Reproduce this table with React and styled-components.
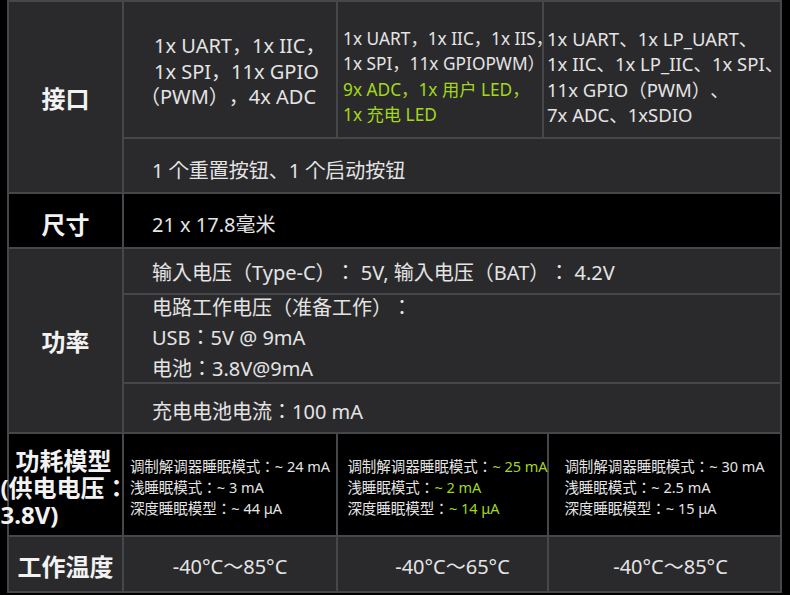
import React from "react";
import styled, { createGlobalStyle } from "styled-components";

const GlobalStyle = createGlobalStyle`
  html, body { margin: 0; padding: 0; background: #000; }
  body {
    font-family: "Noto Sans", "Noto Sans CJK JP", sans-serif;
    color: #e4e4e4;
    text-spacing-trim: space-all;
  }
`;

const Page = styled.div`
  width: 790px;
  height: 595px;
  box-sizing: border-box;
  padding-left: 7px;
  background: #000;
  overflow: hidden;
`;

const Table = styled.div`
  width: 775px;
  box-sizing: border-box;
  padding: 2px;
  display: flex;
  flex-direction: column;
  gap: 2px;
  background: #45474b;
`;

const Section = styled.div`
  display: grid;
  grid-template-columns: ${(p) => p.$cols};
  grid-template-rows: ${(p) => p.$rows};
  gap: 2px;
`;

const Cell = styled.div`
  display: flex;
  align-items: center;
  justify-content: ${(p) => (p.$center ? "center" : "flex-start")};
  background: ${(p) => (p.$black ? "#000" : "#2a2a2c")};
  padding: ${(p) => p.$pad || "0"};
  grid-column: ${(p) => p.$col || "auto"};
  grid-row: ${(p) => p.$row || "auto"};
  box-sizing: border-box;
  min-width: 0;
  white-space: pre;
  font-size: ${(p) => p.$size || 20}px;
  line-height: ${(p) => p.$lh || "normal"};
`;

const Label = styled(Cell)`
  justify-content: center;
  font-weight: 700;
  color: #f2f2f2;
  font-size: ${(p) => p.$size || 24}px;
`;

const Block = styled.div`
  text-align: ${(p) => p.$align || "left"};
  margin-left: ${(p) => p.$shift || 0}px;
`;

const Line = styled.div`
  padding-left: ${(p) => p.$indent || 0}px;
`;

const Green = styled.span`
  color: #a2d81c;
`;

const Lines = ({ items, align, indents = [] }) => (
  <Block $align={align}>
    {items.map((t, i) => (
      <Line key={i} $indent={indents[i]}>
        {t}
      </Line>
    ))}
  </Block>
);

export default function App() {
  return (
    <>
      <GlobalStyle />
      <Page>
        <Table>
          <Section $cols="113px 212px 204px 236px" $rows="135px 53px">
            <Label $row="1 / span 2">接口</Label>
            <Cell $lh="25.5px" $pad="4px 0 0 16px">
              <Lines
                indents={[14, 14, 0]}
                items={["1x UART，1x IIC，", "1x SPI，11x GPIO", "（PWM），4x ADC"]}
              />
            </Cell>
            <Cell $size={17.3} $lh="25.5px" $pad="14px 0 0 5px">
              <Lines
                items={[
                  "1x UART，1x IIC，1x IIS，",
                  "1x SPI，11x GPIOPWM）",
                  <Green>9x ADC，1x 用户 LED，</Green>,
                  <Green>1x 充电 LED</Green>,
                ]}
              />
            </Cell>
            <Cell $size={18.5} $lh="25.5px" $pad="14px 0 0 3px">
              <Lines
                items={[
                  "1x UART、1x LP_UART、",
                  "1x IIC、1x LP_IIC、1x SPI、",
                  "11x GPIO（PWM）、",
                  "7x ADC、1xSDIO",
                ]}
              />
            </Cell>
            <Cell $col="2 / span 3" $pad="7px 0 0 28px">
              1 个重置按钮、1 个启动按钮
            </Cell>
          </Section>

          <Section $cols="113px 1fr" $rows="53px">
            <Label $black $pad="6px 0 0 0">尺寸</Label>
            <Cell $black $pad="6px 0 0 28px">21 x 17.8毫米</Cell>
          </Section>

          <Section $cols="113px 1fr" $rows="44px 87px 48px">
            <Label $row="1 / span 3">功率</Label>
            <Cell $pad="0 0 0 28px">
              输入电压（Type-C）： 5V, 输入电压（BAT）： 4.2V
            </Cell>
            <Cell $pad="0 0 0 28px" $lh="30.5px">
              <Lines
                items={["电路工作电压（准备工作）：", "USB：5V @ 9mA", "电池：3.8V@9mA"]}
              />
            </Cell>
            <Cell $pad="4px 0 0 28px">充电电池电流：100 mA</Cell>
          </Section>

          <Section $cols="113px 212px 209px 231px" $rows="101px">
            <Label $black $lh="27px" $pad="6px 0 0 0">
              <Block $shift={-2}>
                <Line $indent={15}>功耗模型</Line>
                <Line>(供电电压：</Line>
                <Line>3.8V)</Line>
              </Block>
            </Label>
            <Cell $black $center $size={14.5} $lh="21px" $pad="5px 0 0 0">
              <Lines
                items={["调制解调器睡眠模式：~ 24 mA", "浅睡眠模式：~ 3 mA", "深度睡眠模型：~ 44 μA"]}
              />
            </Cell>
            <Cell $black $center $size={14.5} $lh="21px" $pad="5px 0 0 10px">
              <Lines
                items={[
                  <>调制解调器睡眠模式：<Green>~ 25 mA</Green></>,
                  <>浅睡眠模式：<Green>~ 2 mA</Green></>,
                  <>深度睡眠模型：<Green>~ 14 μA</Green></>,
                ]}
              />
            </Cell>
            <Cell $black $center $size={14.5} $lh="21px" $pad="5px 0 0 0">
              <Lines
                items={["调制解调器睡眠模式：~ 30 mA", "浅睡眠模式：~ 2.5 mA", "深度睡眠模型：~ 15 μA"]}
              />
            </Cell>
          </Section>

          <Section $cols="113px 212px 209px 231px" $rows="54px">
            <Label $pad="3px 0 0 0">工作温度</Label>
            <Cell $center $pad="3px 0 0 0">-40°C～85°C</Cell>
            <Cell $center $pad="3px 0 0 20px">-40°C～65°C</Cell>
            <Cell $center $pad="3px 0 0 12px">-40°C～85°C</Cell>
          </Section>
        </Table>
      </Page>
    </>
  );
}
